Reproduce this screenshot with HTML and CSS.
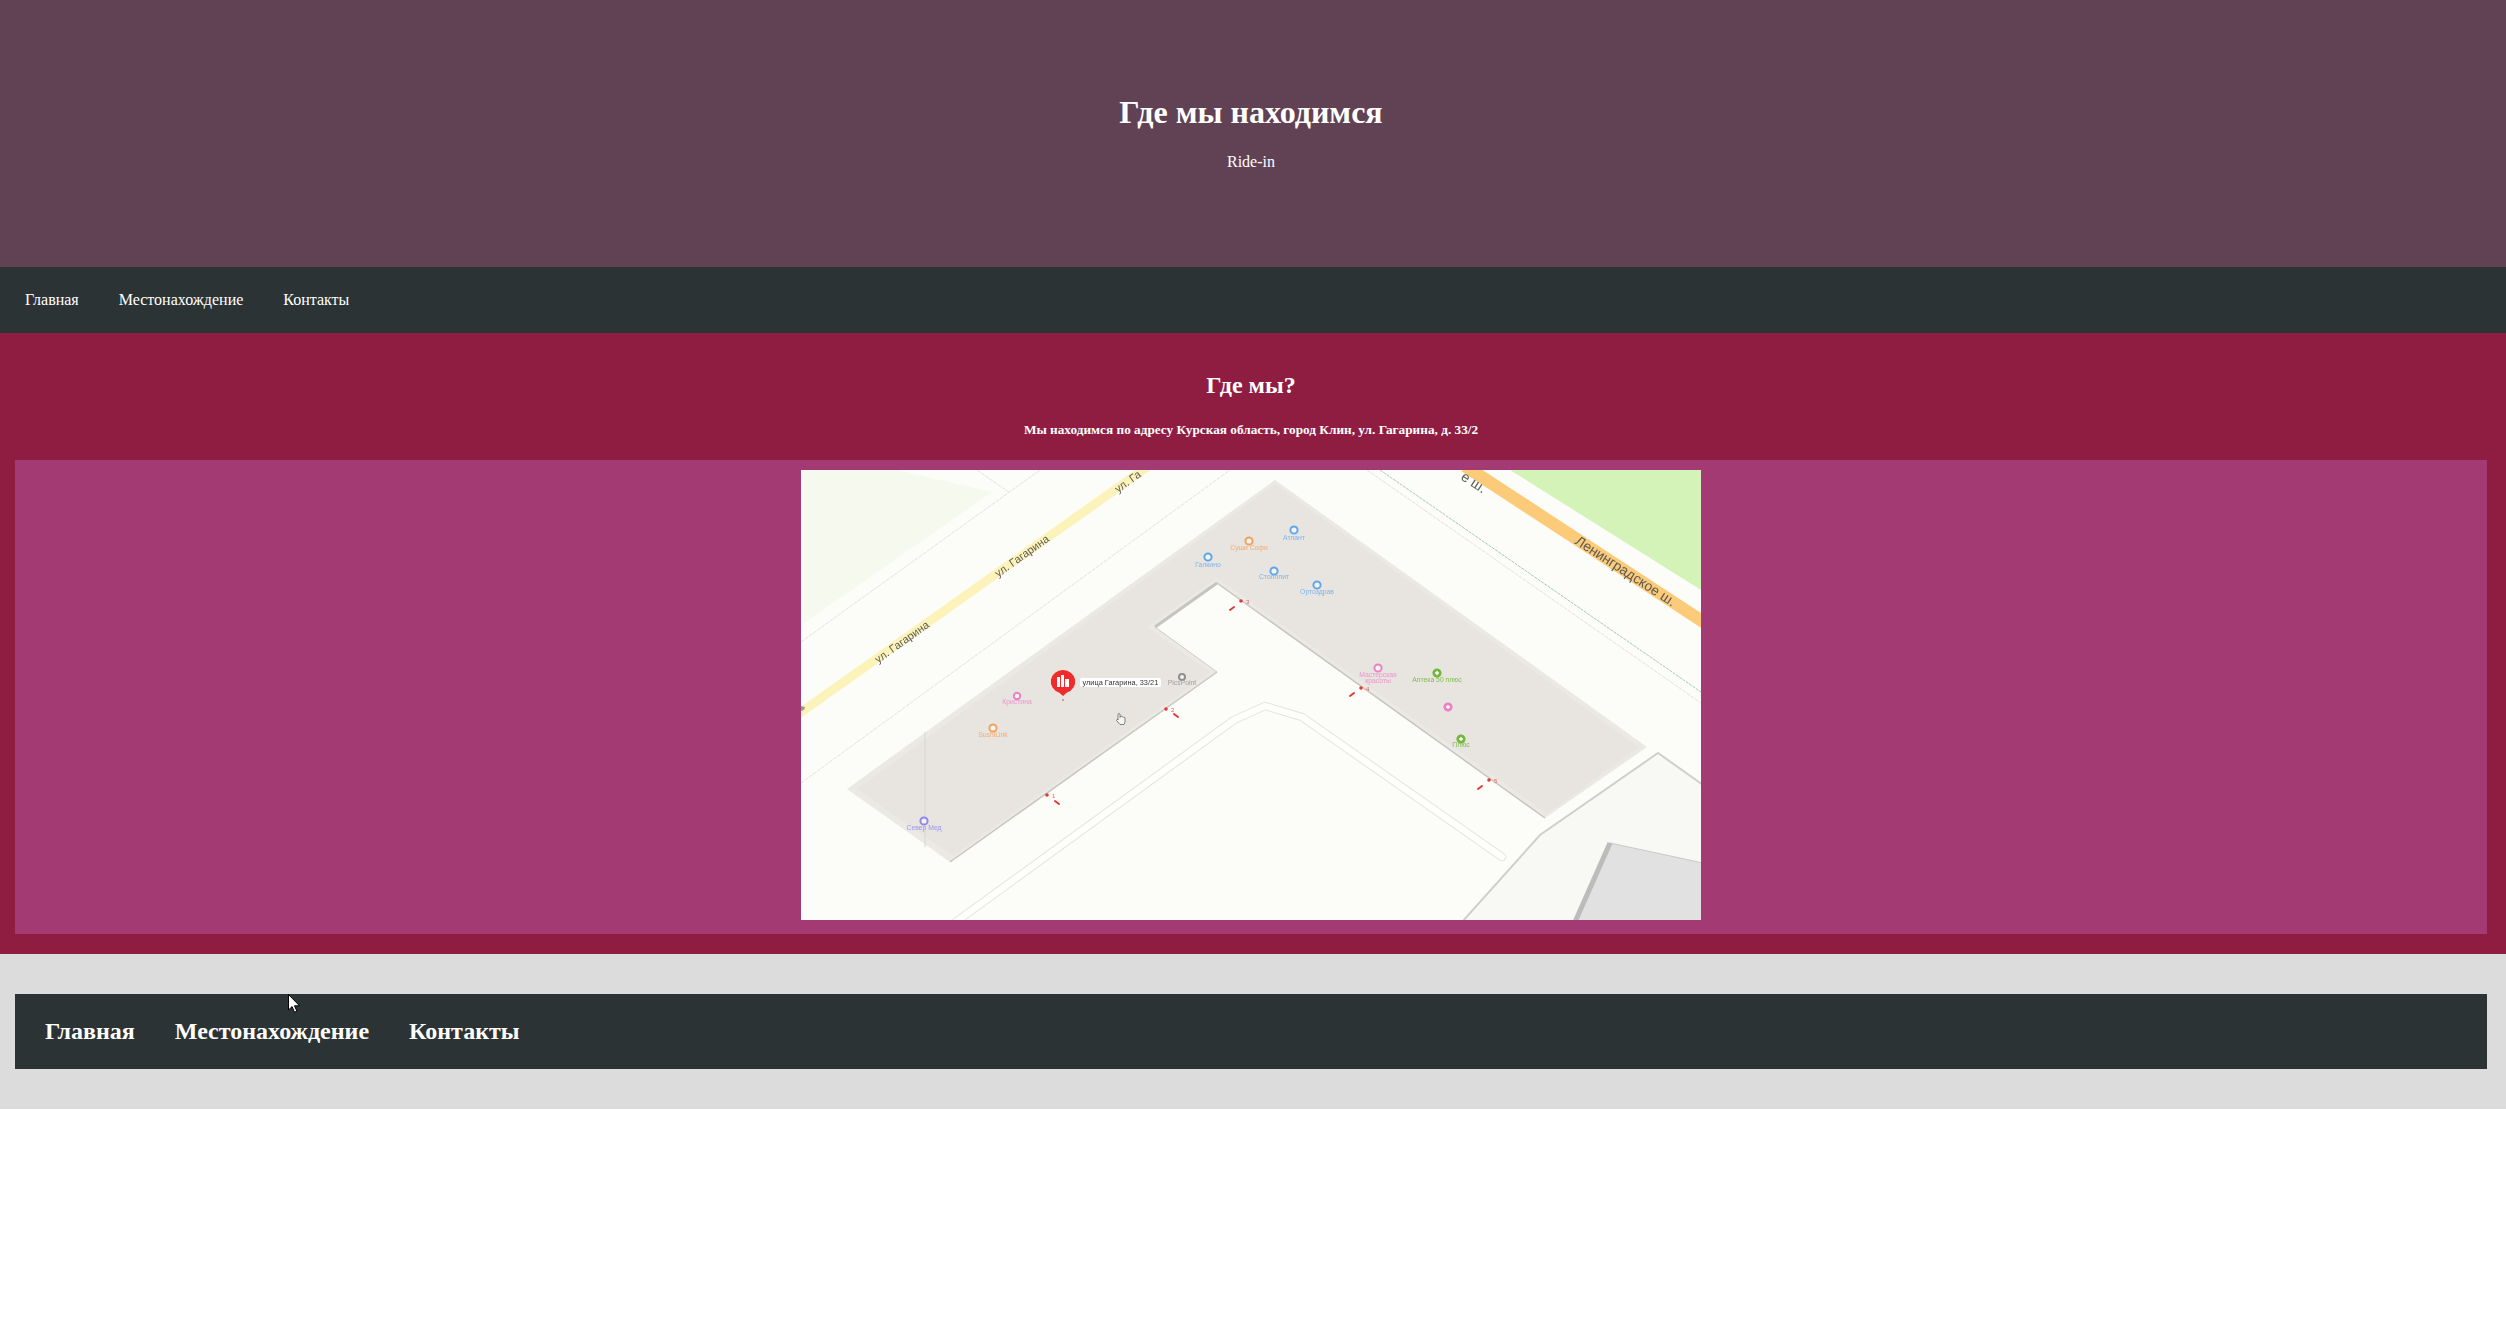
FILE: index.html
```html
<!DOCTYPE html>
<html lang="ru">
<head>
<meta charset="utf-8">
<title>Где мы находимся</title>
<link rel="stylesheet" href="styles.css">
</head>
<body>
<header class="hero">
  <h1 class="hero-title">Где мы находимся</h1>
  <p class="hero-sub">Ride-in</p>
</header>
<nav class="topnav">
  <a href="#">Главная</a>
  <a href="#">Местонахождение</a>
  <a href="#">Контакты</a>
</nav>
<main class="location">
  <h2 class="location-title">Где мы?</h2>
  <p class="location-address">Мы находимся по адресу Курская область, город Клин, ул. Гагарина, д. 33/2</p>
  <div class="map-panel">
    <svg class="map" viewBox="0 0 900 450" width="900" height="450" xmlns="http://www.w3.org/2000/svg">
      <rect class="m-bg" width="900" height="450"/>
      <polygon class="m-park" points="0,0 96,0 191,22 0,155"/>
      <polygon class="m-green" points="709,0 900,0 900,120"/>
      <line class="m-road-y" x1="-4" y1="245" x2="346" y2="-3"/>
      <line class="m-road-o" x1="664" y1="-4" x2="904" y2="153"/>
      <line class="m-dash" x1="176" y1="0" x2="209" y2="23"/>
      <line class="m-dash" x1="0" y1="172" x2="239" y2="0"/>
      <line class="m-dash" x1="0" y1="313" x2="429" y2="0"/>
      <line class="m-dash-t" x1="579" y1="0" x2="900" y2="222"/>
      <line class="m-dash" x1="566" y1="0" x2="900" y2="233"/>

      <polyline class="m-walk-o" points="152,454 433,250 464,236 501,247 701,387"/>
      <polyline class="m-walk-i" points="152,454 433,250 464,236 501,247 701,387"/>

      <polygon class="m-lot" points="661,452 739,365 857,283 902,315 902,452"/>
      <polygon class="m-slab" points="774,452 809,373 902,393 902,452"/>
      <line class="m-slab-edge" x1="774" y1="452" x2="809" y2="373"/>

      <polygon class="m-house" points="474,10 846,277 744,348 416,113 354,157 416,202 149,392 46,319"/>
      <polygon class="m-house-in" points="474,14 838,277 746,344 416,108 346,157 410,202 152,386 56,319"/>
      <polyline class="m-edge" points="149,392 416,202"/>
      <polyline class="m-edge" points="416,113 744,348"/>
      <polyline class="m-edge-thick" points="354,157 416,113"/>
      <polyline class="m-edge-thin" points="354,157 416,202"/>
      <line class="m-seam" x1="124" y1="262" x2="124" y2="377"/>

      <text class="m-label m-mid" transform="translate(103 175) rotate(-35.5)">ул. Гагарина</text>
      <text class="m-label m-mid" transform="translate(223 89) rotate(-35.5)">ул. Гагарина</text>
      <text class="m-label" transform="translate(317 23) rotate(-35.5)">ул. Га</text>
      <text class="m-label m-label-big m-mid" transform="translate(822 105) rotate(33)">Ленинградское ш.</text>
      <text class="m-label m-label-big" transform="translate(659 9) rotate(33)">е ш.</text>

      <g class="poi poi-blue"><circle cx="407" cy="87" r="3.6"/><text x="407" y="97">Галкино</text></g>
      <g class="poi poi-orange"><circle cx="448" cy="71" r="3.6"/><text x="448" y="80">Суши Софи</text></g>
      <g class="poi poi-blue"><circle cx="493" cy="60" r="3.6"/><text x="493" y="70">Атлант</text></g>
      <g class="poi poi-blue"><circle cx="473" cy="101" r="3.6"/><text x="473" y="109">Столплит</text></g>
      <g class="poi poi-blue"><circle cx="516" cy="115" r="3.6"/><text x="516" y="124">Ортоздрав</text></g>
      <g class="poi poi-pink"><circle cx="577" cy="198" r="3.6"/><text x="577" y="207">Мастерская</text><text x="577" y="213">красоты</text></g>
      <g class="poi poi-green poi-solid"><circle cx="636" cy="203" r="3.6"/><path d="M634 203h4M636 201v4"/><text x="636" y="212">Аптека 50 плюс</text></g>
      <g class="poi poi-pink poi-solid"><circle cx="647" cy="237" r="3.6"/><path d="M645 237h4M647 235v4"/></g>
      <g class="poi poi-green poi-solid"><circle cx="660" cy="269" r="3.6"/><path d="M658 269h4M660 267v4"/><text x="660" y="277">Плюс</text></g>
      <g class="poi poi-grey"><circle cx="381" cy="207" r="3"/><text x="381" y="215">PicsPoint</text></g>
      <g class="poi poi-pink"><circle cx="216" cy="226" r="3.2"/><text x="216" y="234">Кристина</text></g>
      <g class="poi poi-orange"><circle cx="192" cy="258" r="3.6"/><text x="192" y="267">SushiLink</text></g>
      <g class="poi poi-violet"><circle cx="123" cy="351" r="3.6"/><text x="123" y="360">Север Мед</text></g>

      <g class="pin">
        <path class="pin-body" d="M262 200a12 11.5 0 0 1 4 22.4l-4 3.6-4-3.6a12 11.5 0 0 1 4-22.4z"/>
        <path class="pin-glyph" d="M256 207h3v10h-3zM260 205h3v12h-3zM264 209h4v8h-4z"/>
        <circle class="pin-body" cx="262" cy="230" r="0.8"/>
        <rect class="pin-tag" x="279" y="208" width="81" height="9" rx="2"/>
        <text class="pin-text" x="281.500" y="215">улица Гагарина, 33/21</text>
      </g>

      <g class="gate"><circle cx="246" cy="325" r="1.8"/><text x="251" y="327.500">1</text><line x1="254" y1="331" x2="258" y2="334"/></g>
      <g class="gate"><circle cx="365" cy="239" r="1.8"/><text x="370" y="241.500">2</text><line x1="373" y1="244" x2="377" y2="247"/></g>
      <g class="gate"><circle cx="440" cy="131" r="1.8"/><text x="445" y="133.500">3</text><line x1="433" y1="137" x2="429" y2="140"/></g>
      <g class="gate"><circle cx="560" cy="218" r="1.8"/><text x="565" y="220.500">4</text><line x1="553" y1="223" x2="549" y2="226"/></g>
      <g class="gate"><circle cx="688" cy="310" r="1.8"/><text x="693" y="312.500">5</text><line x1="681" y1="316" x2="677" y2="319"/></g>

      <path class="m-hand" d="M317 250v-5.500a1 1 0 0 1 2 0v3l.5-1a1 1 0 0 1 1.500 0l.2.5a1 1 0 0 1 1.500.300a1 1 0 0 1 1.300.700v4l-1 2.500h-4l-3.500-4a1 1 0 0 1 1.500-1z"/>
      <path class="m-shield" d="M0 236l4 1-1 3-3 1z"/>
    </svg>
  </div>
</main>
<footer class="foot">
  <div class="foot-bar">
    <a href="#">Главная</a>
    <a href="#">Местонахождение</a>
    <a href="#">Контакты</a>
  </div>
</footer>
<svg class="cursor" width="12" height="20" viewBox="0 0 12 20" xmlns="http://www.w3.org/2000/svg">
  <path d="M.5.5v15.500l3.600-3.400 2.400 5.600 2.400-1-2.400-5.400h5z" fill="#fff" stroke="#000"/>
</svg>
</body>
</html>
```

FILE: styles.css
```css
* { box-sizing: border-box; }

html, body {
  margin: 0;
  padding: 0;
  background: #fff;
}

body {
  position: relative;
  font-family: "Liberation Serif", "Times New Roman", serif;
  color: #fff;
}

a {
  color: #fff;
  text-decoration: none;
}

.hero {
  height: 267px;
  padding: 94px 4px 0 0;
  background: #614254;
  text-align: center;
}

.hero-title {
  margin: 0 0 22px;
  font-size: 32px;
  font-weight: bold;
  line-height: 37px;
}

.hero-sub {
  margin: 0;
  font-size: 16px;
  line-height: 18px;
}

.topnav {
  display: flex;
  gap: 40px;
  height: 66px;
  padding: 24px 25px;
  background: #2c3335;
  font-size: 16px;
  line-height: 18px;
}

.location {
  padding: 39px 19px 20px 15px;
  background: #8f1d42;
  text-align: center;
}

.location-title {
  margin: 0 0 23px;
  font-size: 24px;
  font-weight: bold;
  line-height: 27px;
}

.location-address {
  margin: 0 0 22px;
  font-size: 13.280px;
  font-weight: bold;
  line-height: 16px;
}

.map-panel {
  height: 474px;
  padding-top: 10px;
  background: #a43a73;
}

.map {
  display: block;
  margin: 0 auto;
  filter: blur(0.5px);
}

.m-bg { fill: #fcfcf8; }
.m-park { fill: #f6f9ed; }
.m-green { fill: #d4f3b9; }
.m-road-y { stroke: #fcf3bb; stroke-width: 9; }
.m-road-o { stroke: #fccb7a; stroke-width: 12.5; }
.m-dash { stroke: #e4e4de; stroke-width: 1; stroke-dasharray: 4 1; }
.m-dash-t { stroke: #a4c9bd; stroke-width: 1; stroke-dasharray: 3 1; }
.m-walk-o { fill: none; stroke: #e4e4df; stroke-width: 8.500; stroke-linecap: round; stroke-linejoin: round; }
.m-walk-i { fill: none; stroke: #fefefd; stroke-width: 6.500; stroke-linecap: round; stroke-linejoin: round; }
.m-lot { fill: #f8f8f5; stroke: #cfcfcb; stroke-width: 2; }
.m-slab { fill: #e1e1e1; stroke: #c9c9c9; stroke-width: 1; }
.m-slab-edge { stroke: #bcbcbc; stroke-width: 5; }
.m-house { fill: #ebe9e4; }
.m-house-in { fill: #e8e5e1; }
.m-edge { fill: none; stroke: #c8c6c1; stroke-width: 1.500; }
.m-edge-thick { fill: none; stroke: #c6c4bf; stroke-width: 3; }
.m-edge-thin { fill: none; stroke: #cfcdc8; stroke-width: 1; }
.m-seam { stroke: #d8d6d2; stroke-width: 1; }

.m-label {
  font-family: "Liberation Sans", Arial, sans-serif;
  font-size: 11px;
  fill: #5c5a55;
}

.m-mid { text-anchor: middle; }
.m-label-big { font-size: 14px; }

.poi circle { fill: #f3f3f0; stroke-width: 2; }
.poi text {
  font-family: "Liberation Sans", Arial, sans-serif;
  font-size: 6.800px;
  text-anchor: middle;
}
.poi path { fill: none; stroke: #fff; stroke-width: 1.400; }

.poi-blue circle { stroke: #62a6ea; }
.poi-blue text { fill: #7db5ec; }
.poi-orange circle { stroke: #f2a25c; }
.poi-orange text { fill: #f2ac70; }
.poi-pink circle { stroke: #ea82c4; }
.poi-pink text { fill: #ec94cb; }
.poi-green circle { stroke: #74b63e; }
.poi-green text { fill: #80bd4e; }
.poi-grey circle { stroke: #8f8f8f; }
.poi-grey text { fill: #a0a0a0; }
.poi-violet circle { stroke: #8f86ec; }
.poi-violet text { fill: #9c94ee; }
.poi-solid.poi-green circle { fill: #74b63e; }
.poi-solid.poi-pink circle { fill: #ea82c4; }

.pin-body { fill: #f02b2b; }
.pin-glyph { fill: #fff; }
.pin-tag { fill: #fff; }
.pin-text {
  font-family: "Liberation Sans", Arial, sans-serif;
  font-size: 7.400px;
  fill: #333;
}

.gate circle { fill: #e53935; }
.gate line { stroke: #e53935; stroke-width: 2; stroke-linecap: round; }
.gate text {
  font-family: "Liberation Sans", Arial, sans-serif;
  font-size: 6px;
  fill: #e9605c;
}

.m-hand { fill: #f4f4f2; stroke: #555; stroke-width: 0.700; }
.m-shield { fill: #999; }

.foot {
  height: 155px;
  padding: 40px 19px 40px 15px;
  background: #dcdcdc;
}

.foot-bar {
  display: flex;
  gap: 40px;
  height: 75px;
  padding: 23px 30px;
  background: #2c3335;
  font-size: 24px;
  font-weight: bold;
  line-height: 28px;
}

.cursor {
  position: absolute;
  left: 288px;
  top: 994px;
}
```
